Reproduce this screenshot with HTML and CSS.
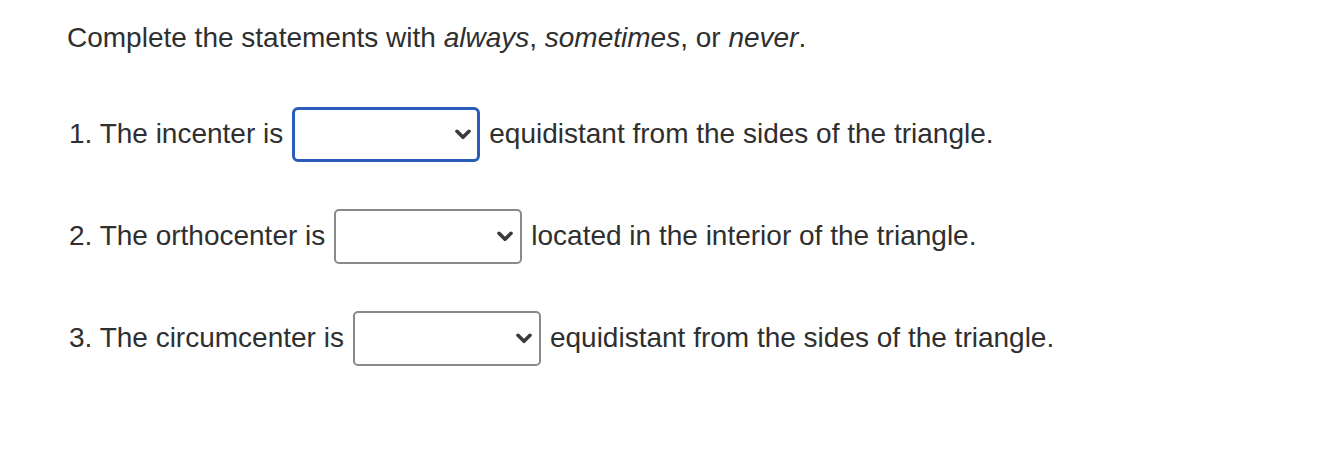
FILE: index.html
```html
<!DOCTYPE html>
<html>
<head>
<meta charset="utf-8">
<link rel="stylesheet" href="styles.css">
</head>
<body>
<div class="page">
  <p class="intro">Complete the statements with <em>always</em>, <em>sometimes</em>, or <em>never</em>.</p>
  <div class="row">
    <span>1. The incenter is</span>
    <span class="dd focused">
      <select class="sel"><option></option><option>always</option><option>sometimes</option><option>never</option></select>
      <svg class="chev" viewBox="0 0 16 11" width="16" height="11"><path d="M2 2.3 L8 8.3 L14 2.3" fill="none" stroke="#3a3a3a" stroke-width="3.6" stroke-linecap="round" stroke-linejoin="round"/></svg>
    </span>
    <span>equidistant from the sides of the triangle.</span>
  </div>
  <div class="row">
    <span>2. The orthocenter is</span>
    <span class="dd">
      <select class="sel"><option></option><option>always</option><option>sometimes</option><option>never</option></select>
      <svg class="chev" viewBox="0 0 16 11" width="16" height="11"><path d="M2 2.3 L8 8.3 L14 2.3" fill="none" stroke="#3a3a3a" stroke-width="3.6" stroke-linecap="round" stroke-linejoin="round"/></svg>
    </span>
    <span>located in the interior of the triangle.</span>
  </div>
  <div class="row">
    <span>3. The circumcenter is</span>
    <span class="dd">
      <select class="sel"><option></option><option>always</option><option>sometimes</option><option>never</option></select>
      <svg class="chev" viewBox="0 0 16 11" width="16" height="11"><path d="M2 2.3 L8 8.3 L14 2.3" fill="none" stroke="#3a3a3a" stroke-width="3.6" stroke-linecap="round" stroke-linejoin="round"/></svg>
    </span>
    <span>equidistant from the sides of the triangle.</span>
  </div>
</div>
</body>
</html>
```
FILE: styles.css
```css
html, body {
  margin: 0;
  padding: 0;
  background: #ffffff;
}
.page {
  font-family: "Liberation Sans", Arial, sans-serif;
  font-size: 28px;
  color: #2f2f2f;
  padding: 22px 0 0 67px;
}
.intro {
  margin: 0 0 52px 0;
  line-height: 32px;
}
.row {
  display: flex;
  align-items: center;
  gap: 9px;
  height: 56px;
  margin-bottom: 46px;
  padding-left: 2px;
}
.dd {
  position: relative;
  display: inline-block;
  width: 188px;
  height: 55px;
}
.sel {
  appearance: none;
  -webkit-appearance: none;
  box-sizing: border-box;
  width: 100%;
  height: 100%;
  border: 2px solid #8a8a8a;
  border-radius: 5px;
  background: #fff;
  margin: 0;
  font: inherit;
  outline: none;
}
.focused .sel {
  border: 3px solid #2a5cb8;
  border-radius: 6px;
}
.chev {
  position: absolute;
  right: 9px;
  top: 22px;
  pointer-events: none;
}
```
